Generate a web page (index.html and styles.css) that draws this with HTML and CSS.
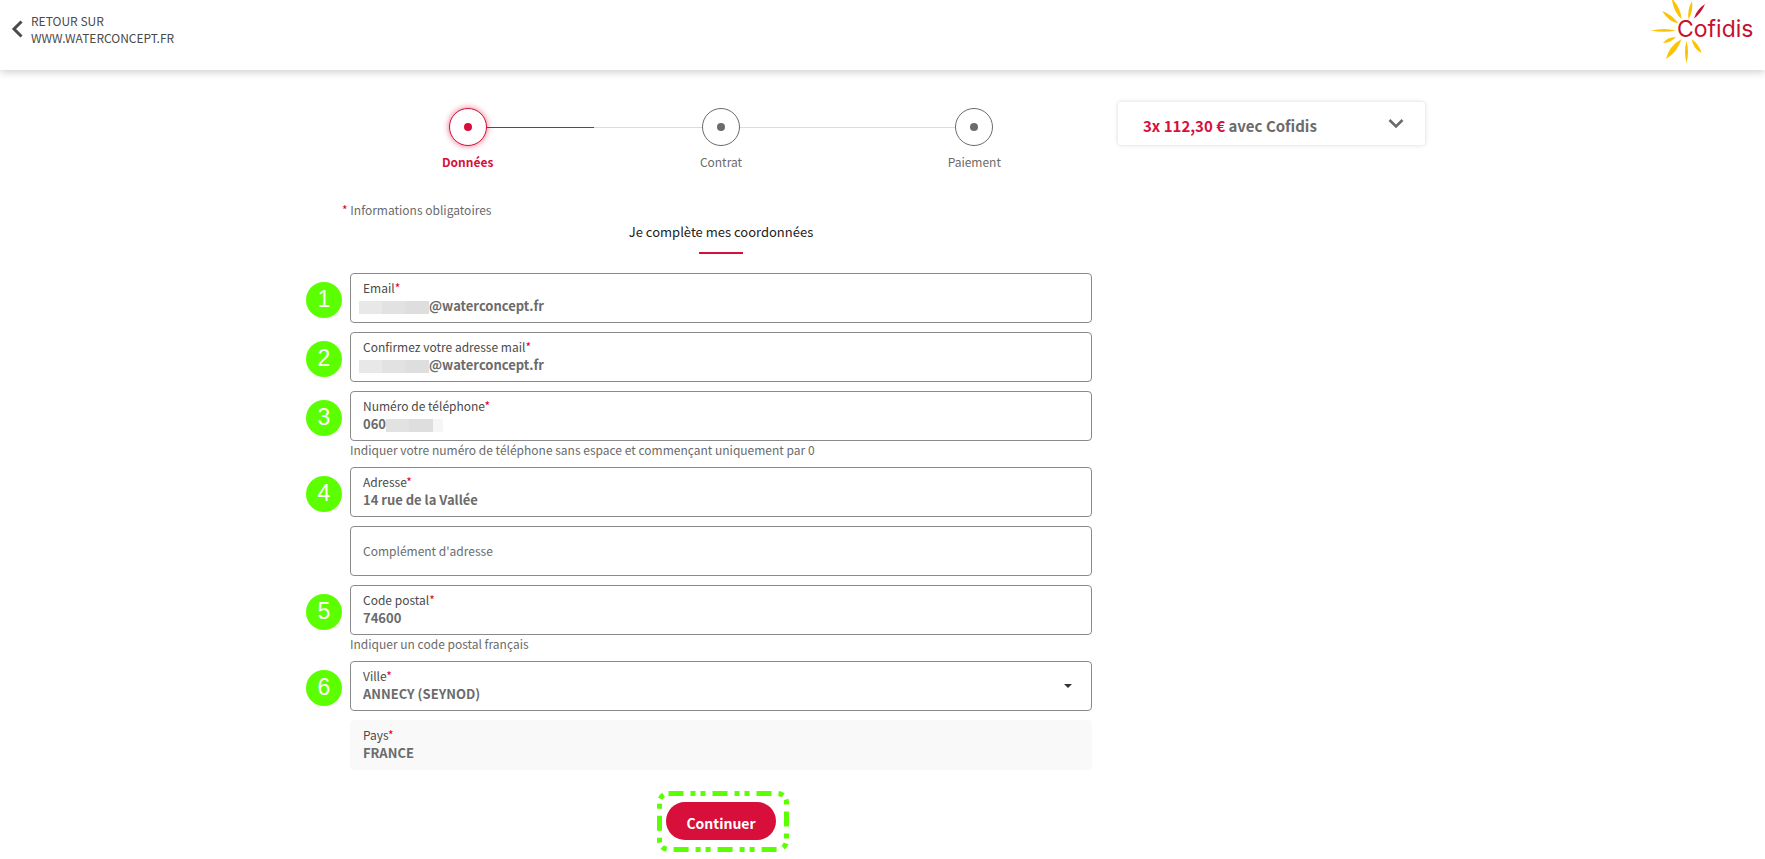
FILE: index.html
```
<!DOCTYPE html>
<html lang="fr">
  <head>
    <meta charset="utf-8" />
    <meta name="viewport" content="width=device-width, initial-scale=1" />
    <title>Cofidis - Mes coordonnées</title>
    <link rel="stylesheet" href="styles.css" />
  </head>
  <body>
    <header class="header">
      <a class="back-link" href="#">
        <svg class="back-icon" width="12" height="18" viewBox="0 0 12 18">
          <path d="M10.500 1.500 L3 9 L10.500 16.500" fill="none" stroke="#4a4a4a" stroke-width="3" />
        </svg>
        <span>RETOUR SUR<br />WWW.WATERCONCEPT.FR</span>
      </a>
      <svg class="logo" width="114" height="66" viewBox="0 0 114 66" role="img" aria-label="Cofidis">
        <g fill="#fdc300">
          <path d="M0 30.500 Q13 27.500 25 30.500 Q13 33 0 30.500Z" />
          <path d="M11 11 Q21 14.500 27.500 23.500 Q18 22 11 11Z" />
          <path d="M20.500 -2 Q30 8 30.500 19 Q23 13 20.500 -2Z" />
          <path d="M41 1 Q42.500 11 37.500 19.500 Q36 10 41 1Z" />
          <path d="M12 43 Q16 37 25 37 Q20.500 42.500 12 43Z" />
          <path d="M15 59 Q18 46 30.500 39 Q26.500 52 15 59Z" />
          <path d="M35.500 41 Q38.500 52 35.500 63 Q32.500 52 35.500 41Z" />
          <path d="M40.500 39 Q48 44 50.500 53 Q42.500 49 40.500 39Z" />
        </g>
        <path d="M54 4 Q50.500 13 43 18.500 Q45.500 9.500 54 4Z" fill="#c8102e" />
        <text class="logo-text" x="26" y="37">Cofidis</text>
      </svg>
    </header>

    <div class="container">
      <main class="main">
        <ol class="steps">
          <li class="step step-active">
            <span class="step-circle"></span>
            <span class="step-label">Données</span>
          </li>
          <li class="step">
            <span class="step-circle"></span>
            <span class="step-label">Contrat</span>
          </li>
          <li class="step">
            <span class="step-circle"></span>
            <span class="step-label">Paiement</span>
          </li>
        </ol>

        <p class="mandatory"><span class="required">*</span> Informations obligatoires</p>
        <h1 class="title">Je complète mes coordonnées</h1>

        <form class="form">
          <div class="field">
            <span class="badge">1</span>
            <label for="email">Email<span class="required">*</span></label>
            <input class="masked-start" type="text" id="email" name="email" value="@waterconcept.fr" />
            <span class="mask mask-email"></span>
          </div>

          <div class="field">
            <span class="badge">2</span>
            <label for="email_confirm">Confirmez votre adresse mail<span class="required">*</span></label>
            <input class="masked-start" type="text" id="email_confirm" name="email_confirm" value="@waterconcept.fr" />
            <span class="mask mask-email"></span>
          </div>

          <div class="field">
            <span class="badge">3</span>
            <label for="phone">Numéro de téléphone<span class="required">*</span></label>
            <input type="tel" id="phone" name="phone" value="060" />
            <span class="mask mask-phone"></span>
          </div>
          <p class="hint">Indiquer votre numéro de téléphone sans espace et commençant uniquement par 0</p>

          <div class="field">
            <span class="badge">4</span>
            <label for="address">Adresse<span class="required">*</span></label>
            <input type="text" id="address" name="address" value="14 rue de la Vallée" />
          </div>

          <div class="field field-empty">
            <input type="text" name="address_extra" aria-label="Complément d'adresse" placeholder="Complément d'adresse" />
          </div>

          <div class="field">
            <span class="badge">5</span>
            <label for="zip">Code postal<span class="required">*</span></label>
            <input type="text" id="zip" name="zip" value="74600" />
          </div>
          <p class="hint">Indiquer un code postal français</p>

          <div class="field">
            <span class="badge">6</span>
            <label for="city">Ville<span class="required">*</span></label>
            <select id="city" name="city">
              <option value="annecy_seynod">ANNECY (SEYNOD)</option>
            </select>
            <span class="caret"></span>
          </div>

          <div class="field field-readonly">
            <label for="country">Pays<span class="required">*</span></label>
            <input type="text" id="country" name="country" value="FRANCE" readonly />
          </div>

          <div class="actions">
            <button type="button" class="continue-button">Continuer</button>
            <svg class="highlight" width="132" height="62" viewBox="0 0 132 62">
              <rect x="2.500" y="2.500" width="127" height="56" rx="9" fill="none" stroke="#5cff00" stroke-width="5" stroke-dasharray="15 7 5 5 5 7" />
            </svg>
          </div>
        </form>
      </main>

      <aside class="sidebar">
        <button type="button" class="summary">
          <span><span class="amount">3x 112,30 €</span> avec Cofidis</span>
          <svg width="16" height="10" viewBox="0 0 16 10">
            <path d="M1.500 1 L8 7.500 L14.500 1" fill="none" stroke="#6b6b6b" stroke-width="2.600" />
          </svg>
        </button>
      </aside>
    </div>
  </body>
</html>
```
FILE: styles.css
```
* {
  box-sizing: border-box;
}
body {
  margin: 0;
  background-color: #fff;
  color: #6b6b6b;
  font-family: "Noto Sans CJK SC", "Noto Sans", sans-serif;
  font-size: 12px;
  line-height: 17px;
}
.header {
  display: flex;
  justify-content: space-between;
  align-items: flex-start;
  height: 70px;
  padding: 0 0 0 11px;
  box-shadow: 0 2px 8px rgba(0, 0, 0, 0.2);
}
.back-link {
  display: flex;
  align-items: center;
  gap: 8px;
  padding-top: 12px;
  color: #4a4a4a;
  text-decoration: none;
}
.logo {
  overflow: visible;
}
.logo-text {
  fill: #c8102e;
  font-family: Inter, sans-serif;
  font-size: 23px;
}

.container {
  display: flex;
  align-items: flex-start;
  gap: 26px;
  max-width: 1141px;
  margin: 0 auto;
  padding: 32px 28px 18px 38px;
}
.main {
  flex: 1;
  min-width: 0;
}
.sidebar {
  flex: 0 0 307px;
}

.steps {
  display: flex;
  margin: 0 -9px;
  padding: 6px 0 0;
  list-style: none;
}
.step {
  display: flex;
  flex: 1;
  flex-direction: column;
  align-items: center;
  background: linear-gradient(#dcdcdc, #dcdcdc) 0 19px / 100% 1px no-repeat;
}
.step:first-child {
  background: linear-gradient(90deg, transparent 50%, #d70f3a 50%) 0 19px / 100% 1px no-repeat;
}
.step:last-child {
  background-size: 50% 1px;
}
.step-circle {
  display: flex;
  align-items: center;
  justify-content: center;
  width: 38px;
  height: 38px;
  border: 1px solid #6b6b6b;
  border-radius: 50%;
  background-color: #fff;
}
.step-circle::before {
  content: "";
  width: 8px;
  height: 8px;
  border-radius: 50%;
  background-color: #6b6b6b;
}
.step-active .step-circle {
  border-color: #d70f3a;
  box-shadow: 0 0 6px rgba(215, 15, 58, 0.6);
}
.step-active .step-circle::before {
  background-color: #d70f3a;
}
.step-label {
  margin-top: 7px;
}
.step-active .step-label {
  color: #d70f3a;
  font-weight: bold;
}

.required {
  color: #e2001a;
}
.mandatory {
  margin: 31px 0 0 -8px;
}
.title {
  display: flex;
  flex-direction: column;
  align-items: center;
  gap: 11px;
  margin: 5px 0 19px;
  color: #222;
  font-size: 13px;
  font-weight: normal;
  line-height: 18px;
}
.title::after {
  content: "";
  width: 44px;
  height: 2px;
  background-color: #d70f3a;
}

.form {
  display: flex;
  flex-direction: column;
}
.field {
  position: relative;
  display: flex;
  flex-direction: column;
  height: 50px;
  margin-bottom: 9px;
  padding: 5px 12px;
  border: 1px solid #8a8a8a;
  border-radius: 4px;
}
.field label {
  margin-bottom: 1px;
  color: #4a4a4a;
}
.field input,
.field select {
  width: 100%;
  height: 18px;
  padding: 0;
  border: none;
  outline: none;
  appearance: none;
  background: transparent;
  color: #6b6b6b;
  font-family: inherit;
  font-size: 13px;
  font-weight: bold;
  line-height: 18px;
}
.field .masked-start {
  padding-left: 66px;
}
.field-empty {
  justify-content: center;
}
.field-empty input {
  font-size: 12px;
  font-weight: normal;
}
.field-empty input::placeholder {
  color: #6b6b6b;
}
.field-readonly {
  border-color: #f9f9f9;
  background-color: #f9f9f9;
}
.hint {
  margin: -9px 0 9px;
}
.badge {
  position: absolute;
  top: 8px;
  left: -45px;
  width: 36px;
  height: 36px;
  border-radius: 50%;
  background-color: #5cff00;
  color: #fff;
  font-family: "Liberation Sans", Arial, sans-serif;
  font-size: 23px;
  line-height: 35px;
  text-align: center;
}
.mask {
  position: absolute;
  top: 27px;
  height: 13px;
}
.mask-email {
  left: 8px;
  width: 70px;
  background: linear-gradient(90deg, #e8e8e8 33%, #e2e2e2 33%, #e2e2e2 66%, #dedede 66%);
}
.mask-phone {
  left: 35px;
  width: 57px;
  background: linear-gradient(90deg, #e2e2e2 40%, #dedede 40%, #dedede 82%, #f6f6f6 82%);
}
.caret {
  position: absolute;
  top: 22px;
  right: 19px;
  border: 4px solid transparent;
  border-top-color: #333;
  border-bottom: none;
  pointer-events: none;
}

.actions {
  position: relative;
  align-self: center;
  margin-top: 23px;
}
.continue-button {
  display: block;
  width: 110px;
  height: 38px;
  padding: 4px 0 0;
  border: none;
  border-radius: 19px;
  background-color: #d70f3a;
  color: #fff;
  font-family: inherit;
  font-size: 14px;
  font-weight: bold;
  cursor: pointer;
}
.highlight {
  position: absolute;
  top: -11px;
  left: -9px;
  pointer-events: none;
}

.summary {
  display: flex;
  align-items: center;
  justify-content: space-between;
  width: 100%;
  height: 43px;
  padding: 4px 21px 0 25px;
  border: none;
  border-radius: 3px;
  background-color: #fff;
  box-shadow: 0 0 4px rgba(0, 0, 0, 0.16);
  color: #6b6b6b;
  font-family: inherit;
  font-size: 15px;
  font-weight: bold;
  cursor: pointer;
}
.summary svg {
  margin-bottom: 4px;
}
.amount {
  color: #d70f3a;
}
```
